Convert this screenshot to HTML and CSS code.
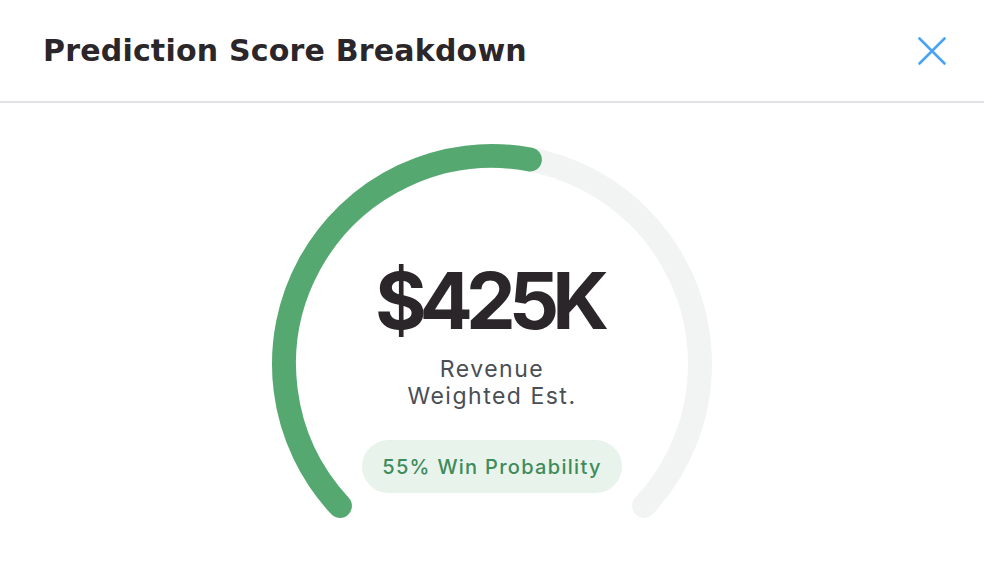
FILE: index.html
```html
<!DOCTYPE html>
<html lang="en">
<head>
<meta charset="utf-8">
<title>Prediction Score Breakdown</title>
<link rel="stylesheet" href="styles.css">
</head>
<body>
<div class="modal">
  <header class="modal-header">
    <h1 class="modal-title">Prediction Score Breakdown</h1>
    <button class="close-btn" aria-label="Close">
      <svg width="28" height="28" viewBox="0 0 28 28" fill="none" stroke="#4aa3f5" stroke-width="2.6" stroke-linecap="round">
        <path d="M1.5 1.5 L26.5 26.5 M26.5 1.5 L1.5 26.5"/>
      </svg>
    </button>
  </header>
  <main class="modal-body">
    <div class="gauge">
      <svg class="gauge-svg" width="466" height="400" viewBox="0 0 466 400" fill="none" stroke-linecap="round" stroke-width="24">
        <path d="M80.9 374.9 A208 208 0 1 1 385.1 374.9" stroke="#f2f4f3"/>
        <path d="M80.9 374.9 A208 208 0 0 1 270.9 28.5" stroke="#54a870"/>
      </svg>
      <div class="gauge-content">
        <div class="amount">$425K</div>
        <div class="label">
          <span class="label-line">Revenue</span>
          <span class="label-line">Weighted Est.</span>
        </div>
        <div class="badge">55% Win Probability</div>
      </div>
    </div>
  </main>
</div>
</body>
</html>
```

FILE: styles.css
```css
html, body {
  margin: 0;
  padding: 0;
  background: #ffffff;
}

body {
  font-family: "Inter", "Noto Sans", sans-serif;
  color: #2a2629;
}

.modal {
  width: 984px;
  height: 578px;
  display: flex;
  flex-direction: column;
}

.modal-header {
  height: 101px;
  flex: none;
  display: flex;
  align-items: center;
  justify-content: space-between;
  padding: 0 38px 0 43px;
  border-bottom: 2px solid #e2e2e6;
  box-sizing: content-box;
}

.modal-title {
  margin: 0;
  font-family: "DejaVu Sans", "Inter", sans-serif;
  font-size: 30px;
  font-weight: 700;
  letter-spacing: 0.2px;
  color: #2a2629;
}

.close-btn {
  border: 0;
  background: none;
  padding: 0;
  width: 28px;
  height: 28px;
  display: flex;
  cursor: pointer;
}

.modal-body {
  flex: 1;
  display: flex;
  justify-content: center;
  padding-top: 28px;
}

.gauge {
  position: relative;
  width: 466px;
  height: 400px;
}

.gauge-svg {
  position: absolute;
  left: 0;
  top: 0;
}

.gauge-content {
  position: relative;
  display: flex;
  flex-direction: column;
  align-items: center;
  padding-top: 130px;
}

.amount {
  font-size: 79px;
  font-weight: 700;
  line-height: 1;
  letter-spacing: -7px;
  margin-left: -7px;
  color: #2a2629;
}

.label {
  margin-top: 16px;
  display: flex;
  flex-direction: column;
  align-items: center;
  font-size: 23px;
  letter-spacing: 1.5px;
  color: #4a4e55;
}

.label-line {
  display: block;
  height: 27px;
  line-height: 27px;
}

.badge {
  margin-top: 30px;
  height: 53px;
  padding: 0 20px;
  border-radius: 27px;
  background: #e8f3ec;
  color: #3e8b5b;
  font-size: 20px;
  font-weight: 500;
  letter-spacing: 1.3px;
  display: flex;
  align-items: center;
}
```
